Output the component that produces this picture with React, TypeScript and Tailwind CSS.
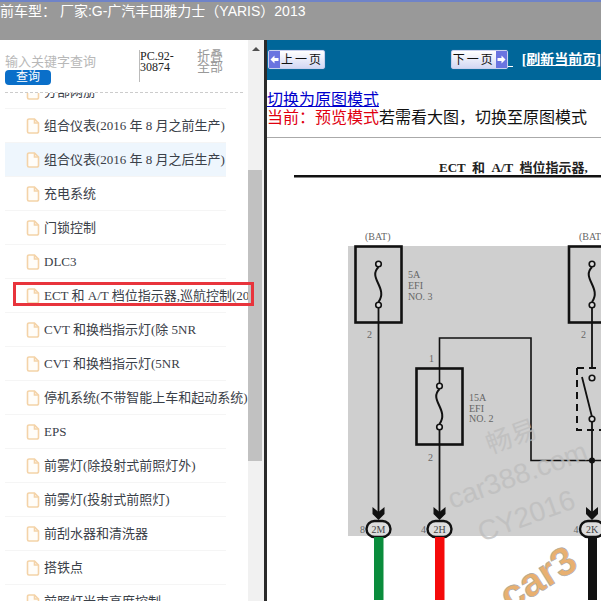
const rows = [
  "分部网册",
  "组合仪表(2016 年 8 月之前生产)",
  "组合仪表(2016 年 8 月之后生产)",
  "充电系统",
  "门锁控制",
  "DLC3",
  "ECT 和 A/T 档位指示器,巡航控制(2016 年 8 月之后生产)",
  "CVT 和换档指示灯(除 5NR",
  "CVT 和换档指示灯(5NR",
  "停机系统(不带智能上车和起动系统)",
  "EPS",
  "前雾灯(除投射式前照灯外)",
  "前雾灯(投射式前照灯)",
  "前刮水器和清洗器",
  "搭铁点",
  "前照灯光束高度控制",
];

function DocIcon() {
  return (
    <svg width="14" height="16" viewBox="0 0 14 16" className="shrink-0" fill="#fffdf9" stroke="#f4d3a8" strokeWidth="1.6">
      <path d="M1.5 2.5a1.5 1.5 0 0 1 1.5-1.5h5.5l4 4v8.5a1.5 1.5 0 0 1-1.5 1.5H3a1.5 1.5 0 0 1-1.5-1.5z" />
      <path d="M8.5 1v4h4" fill="none" />
    </svg>
  );
}

function PageButton({ label, dir }: { label: string; dir: "left" | "right" }) {
  const arrow = (
    <span className="flex h-full w-[11px] items-center justify-center bg-[#6a74e0]">
      <svg width="9" height="9" viewBox="0 0 9 9" fill="#ffffff">
        {dir === "left" ? <path d="M0.5 4.5 4.5 0.5v2.5h4v3h-4v2.5z" /> : <path d="M8.5 4.5 4.5 0.5v2.5h-4v3h4v2.5z" />}
      </svg>
    </span>
  );
  return (
    <div className="flex h-[19px] w-[67px] items-center rounded-[2px] border border-[#c8d0ee] bg-gradient-to-b from-[#ffffff] to-[#d4d8f4] shadow-[0_0_1px_#8890c0]">
      {dir === "left" && arrow}
      <span className="flex-1 text-center text-[12px] leading-none tracking-[2px] text-[#111]">{label}</span>
      {dir === "right" && arrow}
    </div>
  );
}

function Fuse({ x, y }: { x: number; y: number }) {
  return (
    <g fill="none" stroke="#111" strokeWidth="1.6">
      <path d={`M${x} ${y + 3} C${x - 11} ${y + 14} ${x + 10} ${y + 24} ${x} ${y + 38}`} strokeWidth="2" />
      <circle cx={x} cy={y} r="2.8" fill="#ddd" />
      <circle cx={x} cy={y + 41} r="2.8" fill="#ddd" />
    </g>
  );
}

function Connector({ x, label, pin }: { x: number; label: string; pin: string }) {
  return (
    <g>
      <path d={`M${x - 6} 508 L${x} 513 L${x + 6} 508 L${x + 6} 515 L${x} 521 L${x - 6} 515z`} fill="#111" />
      <rect x={x - 12} y="522" width="24" height="16" rx="8" fill="#ddd" stroke="#111" strokeWidth="2.4" />
      <text x={x} y="534" textAnchor="middle" fontSize="10" fill="#444" fontFamily="'Liberation Serif', serif">{label}</text>
      <text x={x - 16} y="534" textAnchor="middle" fontSize="10" fill="#666" fontFamily="'Liberation Serif', serif">{pin}</text>
    </g>
  );
}

function Diagram() {
  const serif = "'Liberation Serif', 'Noto Sans CJK SC', serif";
  return (
    <svg viewBox="267 139 334 462" className="block h-[462px] w-[334px]">
      <text x="439" y="173" fontSize="13" fontWeight="700" fill="#222" fontFamily={serif} xmlSpace="preserve">ECT  和  A/T  档位指示器,</text>
      <rect x="294" y="176" width="307" height="2.5" fill="#111" />
      <rect x="348" y="247" width="253" height="290" fill="#cfcfcf" />

      <g fontFamily={serif} fill="#666" fontSize="10">
        <text x="365" y="241">(BAT)</text>
        <text x="579" y="241">(BAT)</text>
        <text x="408" y="279">5A</text>
        <text x="408" y="290">EFI</text>
        <text x="408" y="301">NO. 3</text>
        <text x="367" y="339">2</text>
        <text x="581" y="339">2</text>
        <text x="429" y="363">1</text>
        <text x="469" y="402">15A</text>
        <text x="469" y="413">EFI</text>
        <text x="469" y="423">NO. 2</text>
        <text x="428" y="462">2</text>
      </g>

      <g fill="none" stroke="#111">
        <rect x="355.500" y="247.500" width="46" height="76" strokeWidth="2.6" />
        <rect x="569" y="247.500" width="46" height="76" strokeWidth="2.6" />
        <rect x="416.500" y="369.500" width="46" height="76" strokeWidth="2.6" />
        <path d="M378.500 306V515" strokeWidth="1.8" />
        <path d="M439.500 428V515" strokeWidth="1.8" />
        <path d="M439.500 384V339H531V461.500H601" strokeWidth="1.6" />
        <path d="M592 306V370M592 420V515" strokeWidth="1.8" />
        <path d="M577 369H601M577 369V431H601" strokeWidth="2" strokeDasharray="7 5" />
        <path d="M582 378L592 418" strokeWidth="1.8" />
      </g>
      <Fuse x={378.500} y={265} />
      <Fuse x={592} y={265} />
      <Fuse x={439.500} y={387} />
      <circle cx="592" cy="379" r="2.8" fill="#ddd" stroke="#111" strokeWidth="1.6" />
      <circle cx="592" cy="420" r="2.8" fill="#ddd" stroke="#111" strokeWidth="1.6" />
      <circle cx="592" cy="461.500" r="3" fill="#111" />

      <g fill="#bdbdbd" opacity="0.75" fontFamily="'Liberation Sans', 'Noto Sans CJK SC', sans-serif">
        <text x="490" y="455" fontSize="26" transform="rotate(-20 490 455)">畅易</text>
        <text x="452" y="510" fontSize="28" transform="rotate(-20 452 510)">car388.com</text>
        <text x="482" y="543" fontSize="28" transform="rotate(-20 482 543)">CY2016</text>
      </g>

      <Connector x={378.500} label="2M" pin="8" />
      <Connector x={439.500} label="2H" pin="4" />
      <Connector x={592} label="2K" pin="4" />

      <rect x="374" y="538" width="9.500" height="63" fill="#0a8c3c" />
      <rect x="435" y="538" width="9.500" height="63" fill="#f50a0a" />
      <rect x="588" y="538" width="9" height="63" fill="#111" />

      <text x="510" y="612" fontSize="40" fontWeight="700" fill="#e8b070" stroke="#a8a8a8" strokeWidth="0.6" transform="rotate(-32 510 612)" fontFamily="'Liberation Sans', sans-serif">car3</text>
    </svg>
  );
}

export default function App() {
  return (
    <div className="relative flex h-[601px] w-[601px] flex-col overflow-hidden bg-white font-['Liberation_Sans','Noto_Sans_CJK_SC',sans-serif]">
      <div className="h-[40px] shrink-0 border-t-2 border-[#6f83c8] bg-[#999999] pl-0 pt-[1px] text-[14px] leading-[17px] whitespace-nowrap text-white">
        前车型： 厂家:G-广汽丰田雅力士（YARIS）2013
      </div>
      <div className="flex min-h-0 flex-1">
        <div className="flex w-[248px] shrink-0 flex-col">
          <div className="flex h-[52px] shrink-0 pl-[5px] pt-[10px]">
            <div className="w-[134px] shrink-0">
              <div className="mt-[3px] text-[13px] leading-[17px] whitespace-nowrap text-[#b8b8b8]">输入关键字查询</div>
              <div className="h-[15px] w-[46px] rounded-[4px] bg-[#0a6fc9] text-center text-[12px] leading-[15px] text-white">查询</div>
            </div>
            <div className="h-[32px] w-[48px] shrink-0 border-l border-[#bbbbbb] font-['Liberation_Serif','Noto_Sans_CJK_SC',serif] text-[12px] leading-[11px] text-[#222]">
              <div className="w-[40px] pt-[1px]">PC.92-30874</div>
            </div>
            <div className="ml-[10px] w-[38px] text-[13px] leading-[11px] text-[#999]">折叠全部</div>
          </div>
          <div className="mx-[5px] shrink-0 border-t border-dashed border-[#cccccc]" />
          <div className="min-h-0 flex-1 overflow-hidden">
            <div className="-mt-[18px] flex flex-col">
              {rows.map((r, i) => (
                <div
                  key={r}
                  className={`ml-[5px] flex h-[34px] w-[221px] shrink-0 items-center gap-[4px] border-b border-[#f5f5f5] pl-[21px] text-[13px] whitespace-nowrap font-['Liberation_Serif','Noto_Sans_CJK_SC',serif] text-[#3a4048] ${i === 2 ? "bg-[#eef6fd]" : ""}`}
                >
                  <DocIcon />
                  <span>{r}</span>
                </div>
              ))}
            </div>
          </div>
        </div>
        <div className="flex w-[16px] shrink-0 flex-col bg-[#f1f1f1]">
          <div className="flex h-[130px] shrink-0 justify-center pt-[7px]">
            <div className="h-0 w-0 border-x-[4px] border-b-[4px] border-x-transparent border-b-[#505050]" />
          </div>
          <div className="h-[291px] w-[14px] bg-[#c1c1c1]" />
        </div>
        <div className="w-[3px] shrink-0 bg-[#2a2a2a]" />
        <div className="flex min-w-0 flex-1 flex-col">
          <div className="flex h-[40px] shrink-0 items-center whitespace-nowrap bg-[#006699] pb-[1px] pl-[1px]">
            <PageButton label="上一页" dir="left" />
            <div className="w-[126px] shrink-0" />
            <PageButton label="下一页" dir="right" />
            <span className="mt-[14px] h-[1px] w-[5px] shrink-0 bg-white" />
            <span className="ml-[9px] font-['Liberation_Serif','Noto_Sans_CJK_SC',serif] text-[14px] font-bold text-white underline">[刷新当前页]</span>
          </div>
          <div className="h-[58px] shrink-0 border-b border-[#aaaaaa] pt-[11px] text-[16px] leading-[18px] whitespace-nowrap">
            <div className="text-[#0000cc] underline">切换为原图模式</div>
            <div>
              <span className="text-[#e0000f]">当前：预览模式</span>
              <span className="text-[#111]">若需看大图，切换至原图模式</span>
            </div>
          </div>
          <Diagram />
        </div>
      </div>
      <div className="absolute left-[13px] top-[282px] h-[24px] w-[241px] border-[3px] border-[#e8343c]" />
    </div>
  );
}
